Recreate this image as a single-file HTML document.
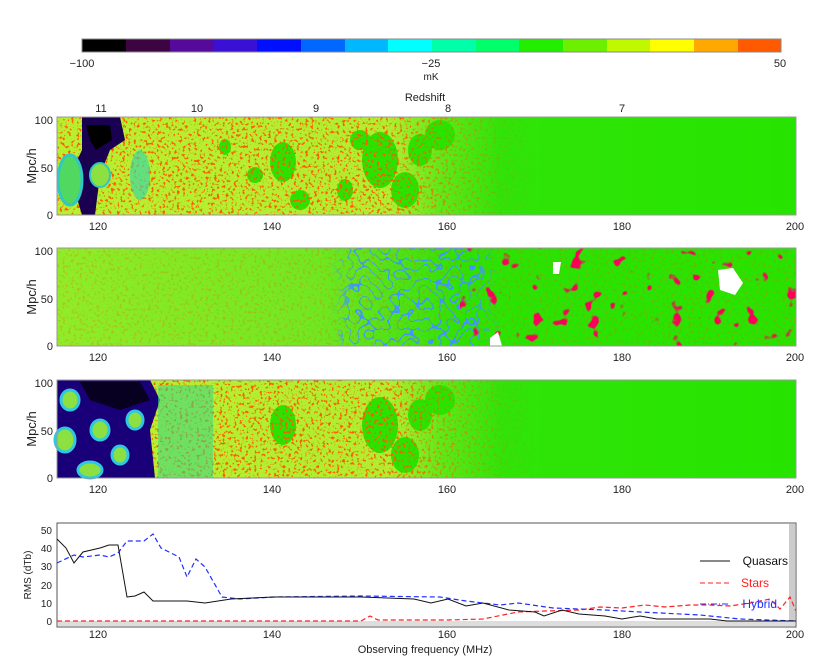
<!DOCTYPE html><html><head><meta charset="utf-8"><style>
html,body{margin:0;padding:0;background:#fff;}
svg{display:block;font-family:"Liberation Sans",sans-serif;}
</style></head><body>
<svg width="822" height="658" viewBox="0 0 822 658" xmlns="http://www.w3.org/2000/svg">
<defs>
<linearGradient id="g1" x1="0" x2="1"><stop offset="0" stop-color="#b8f030"/><stop offset="0.45" stop-color="#b0ee30"/><stop offset="0.52" stop-color="#60e818"/><stop offset="0.6" stop-color="#30e408"/><stop offset="1" stop-color="#26e400"/></linearGradient>
<linearGradient id="g2" x1="0" x2="1"><stop offset="0" stop-color="#90ec28"/><stop offset="0.35" stop-color="#70e820"/><stop offset="0.45" stop-color="#50e418"/><stop offset="0.55" stop-color="#2ae404"/><stop offset="1" stop-color="#26e400"/></linearGradient>
<linearGradient id="mk" x1="0" x2="1"><stop offset="0" stop-color="#fff"/><stop offset="0.45" stop-color="#fff"/><stop offset="0.55" stop-color="#666"/><stop offset="0.65" stop-color="#000"/></linearGradient>
<linearGradient id="mk3" x1="0" x2="1"><stop offset="0" stop-color="#000"/><stop offset="0.15" stop-color="#fff"/><stop offset="0.85" stop-color="#fff"/><stop offset="1" stop-color="#000"/></linearGradient>
<mask id="m1" maskContentUnits="objectBoundingBox"><rect width="1" height="1" fill="url(#mk)"/></mask>
<mask id="m3" maskContentUnits="objectBoundingBox"><rect width="1" height="1" fill="url(#mk3)"/></mask>
<filter id="red" x="0" y="0" width="100%" height="100%"><feTurbulence type="fractalNoise" baseFrequency="0.35" numOctaves="2" seed="3"/><feColorMatrix values="0 0 0 0 1  0 0 0 0 0.1  0 0 0 0 0  7 0 0 0 -3.9"/></filter>
<filter id="red2" x="0" y="0" width="100%" height="100%"><feTurbulence type="fractalNoise" baseFrequency="0.07" numOctaves="2" seed="7"/><feColorMatrix values="0 0 0 0 0.95  0 0 0 0 0  0 0 0 0 0.1  14 0 0 0 -9.2"/></filter>
<filter id="ring" x="0" y="0" width="100%" height="100%"><feTurbulence type="fractalNoise" baseFrequency="0.1" numOctaves="1" seed="5"/><feColorMatrix values="0 0 0 0 0.05  0 0 0 0 0.3  0 0 0 0 1  1 0 0 0 0"/><feComponentTransfer><feFuncA type="discrete" tableValues="0 0 0 0 0 0 0 0 0 1 0 0 0 0 0 0 0 0 0 0"/></feComponentTransfer></filter>
</defs>

<g stroke="none">
<rect x="82" y="39" width="44" height="13" fill="#000"/><rect x="126" y="39" width="44" height="13" fill="#3c0440"/><rect x="170" y="39" width="44" height="13" fill="#560a9c"/><rect x="214" y="39" width="44" height="13" fill="#3a10d4"/><rect x="257" y="39" width="44" height="13" fill="#0010ff"/><rect x="301" y="39" width="44" height="13" fill="#0068ff"/><rect x="345" y="39" width="44" height="13" fill="#00b8ff"/><rect x="388" y="39" width="44" height="13" fill="#00ffff"/><rect x="432" y="39" width="44" height="13" fill="#00ffa8"/><rect x="476" y="39" width="44" height="13" fill="#00ff68"/><rect x="519" y="39" width="44" height="13" fill="#22ee00"/><rect x="563" y="39" width="44" height="13" fill="#6cf000"/><rect x="607" y="39" width="44" height="13" fill="#c0f800"/><rect x="650" y="39" width="44" height="13" fill="#ffff00"/><rect x="694" y="39" width="44" height="13" fill="#ffa800"/><rect x="738" y="39" width="43" height="13" fill="#ff5a00"/>
</g>
<rect x="82" y="39" width="699" height="13" fill="none" stroke="#888" stroke-width="1"/>
<g font-size="11" fill="#222" text-anchor="middle">
<text x="82" y="67">−100</text><text x="431" y="67">−25</text><text x="431" y="80" font-size="10">mK</text><text x="780" y="67">50</text>
<text x="425" y="101">Redshift</text>
<text x="101" y="112">11</text><text x="197" y="112">10</text><text x="316" y="112">9</text><text x="448" y="112">8</text><text x="622" y="112">7</text>
</g>

<g>
<rect x="57" y="117" width="739" height="98" fill="url(#g1)"/>
<g fill="#2ae400"><ellipse cx="283" cy="162" rx="13" ry="20"/><ellipse cx="300" cy="200" rx="10" ry="10"/><ellipse cx="380" cy="160" rx="18" ry="28"/><ellipse cx="405" cy="190" rx="14" ry="18"/><ellipse cx="255" cy="175" rx="8" ry="8"/><ellipse cx="345" cy="190" rx="8" ry="11"/><ellipse cx="225" cy="147" rx="6" ry="8"/><ellipse cx="440" cy="135" rx="15" ry="15"/><ellipse cx="420" cy="150" rx="12" ry="16"/><ellipse cx="360" cy="140" rx="10" ry="10"/></g>
<rect x="57" y="117" width="739" height="98" filter="url(#red)" mask="url(#m1)"/>
<path d="M82 117 L120 117 L125 140 L110 150 L100 175 L95 215 L82 215 L70 175 L82 150 Z" fill="#1a0050"/>
<path d="M86 125 L110 125 L112 140 L96 150 L90 140 Z" fill="#000"/>
<ellipse cx="70" cy="180" rx="12" ry="25" fill="#50d860" stroke="#30c8c0" stroke-width="3"/>
<ellipse cx="140" cy="175" rx="10" ry="25" fill="#40d8a0" opacity="0.7"/>
<ellipse cx="100" cy="175" rx="10" ry="12" fill="#8ce040" stroke="#30c8c0" stroke-width="2"/>
</g>
<rect x="57" y="117" width="739" height="98" fill="none" stroke="#999" stroke-width="1"/>

<g>
<rect x="57" y="248" width="739" height="98" fill="url(#g2)"/>
<rect x="57" y="248" width="739" height="98" filter="url(#red)" opacity="0.25"/>
<rect x="330" y="248" width="170" height="98" filter="url(#ring)" mask="url(#m3)"/>
<rect x="460" y="248" width="336" height="98" filter="url(#red2)"/>
<g fill="#fff"><path d="M718 270 l15 -2 l10 15 l-8 12 l-15 -5z"/><path d="M553 262 l8 0 l-2 12 l-6 0z"/><path d="M490 338 l8 -6 l4 14 l-12 0z"/></g>
</g>
<rect x="57" y="248" width="739" height="98" fill="none" stroke="#999" stroke-width="1"/>

<g>
<rect x="57" y="380" width="739" height="98" fill="url(#g1)"/>
<g fill="#2ae400"><ellipse cx="283" cy="425" rx="13" ry="20"/><ellipse cx="380" cy="425" rx="18" ry="28"/><ellipse cx="405" cy="455" rx="14" ry="18"/><ellipse cx="440" cy="400" rx="15" ry="15"/><ellipse cx="420" cy="415" rx="12" ry="16"/></g>
<rect x="57" y="380" width="739" height="98" filter="url(#red)" mask="url(#m1)"/>
<path d="M57 380 L150 380 L160 400 L150 430 L155 478 L57 478 Z" fill="#1a0078"/>
<path d="M80 382 L140 382 L150 400 L120 410 L90 400 Z" fill="#080020"/>
<g fill="#8ce040" stroke="#30c8e0" stroke-width="3"><ellipse cx="70" cy="400" rx="9" ry="10"/><ellipse cx="65" cy="440" rx="10" ry="12"/><ellipse cx="100" cy="430" rx="9" ry="10"/><ellipse cx="90" cy="470" rx="12" ry="8"/><ellipse cx="120" cy="455" rx="8" ry="9"/><ellipse cx="135" cy="420" rx="8" ry="9"/></g>
<rect x="158" y="385" width="55" height="93" fill="#40d880" opacity="0.6"/>
</g>
<rect x="57" y="380" width="739" height="98" fill="none" stroke="#999" stroke-width="1"/>

<g font-size="11" fill="#222" text-anchor="end">
<text x="53" y="124">100</text><text x="53" y="172">50</text><text x="53" y="219">0</text>
<text x="53" y="255">100</text><text x="53" y="303">50</text><text x="53" y="350">0</text>
<text x="53" y="387">100</text><text x="53" y="435">50</text><text x="53" y="482">0</text>
</g>
<g font-size="13" fill="#222" text-anchor="middle">
<text transform="translate(36 166) rotate(-90)">Mpc/h</text>
<text transform="translate(36 297) rotate(-90)">Mpc/h</text>
<text transform="translate(36 429) rotate(-90)">Mpc/h</text>
</g>
<g font-size="11" fill="#222" text-anchor="middle">
<text x="98" y="230">120</text><text x="272" y="230">140</text><text x="447" y="230">160</text><text x="622" y="230">180</text><text x="795" y="230">200</text>
<text x="98" y="361">120</text><text x="272" y="361">140</text><text x="447" y="361">160</text><text x="622" y="361">180</text><text x="795" y="361">200</text>
<text x="98" y="493">120</text><text x="272" y="493">140</text><text x="447" y="493">160</text><text x="622" y="493">180</text><text x="795" y="493">200</text>
</g>

<rect x="57" y="523" width="739" height="104" fill="none" stroke="#555" stroke-width="1"/>
<rect x="789" y="524" width="6" height="102" fill="#ccc"/>
<rect x="58" y="621" width="737" height="5" fill="#ddd"/>
<g font-size="10" fill="#222" text-anchor="end">
<text x="52" y="534">50</text><text x="52" y="552">40</text><text x="52" y="570">30</text><text x="52" y="589">20</text><text x="52" y="607">10</text><text x="52" y="625">0</text>
</g>
<text transform="translate(31 575) rotate(-90)" font-size="10" fill="#222" text-anchor="middle">RMS (dTb)</text>
<g font-size="11" fill="#222" text-anchor="middle">
<text x="98" y="638">120</text><text x="272" y="638">140</text><text x="447" y="638">160</text><text x="622" y="638">180</text><text x="795" y="638">200</text>
<text x="425" y="653">Observing frequency (MHz)</text>
</g>
<polyline fill="none" stroke="#ff2020" stroke-width="1.2" stroke-dasharray="5,3" points="57,621 361,621 370,616 378,620 448,620 483,619 518,612 545,611 580,610 600,607 622,608 645,605 665,607 690,605 710,605 730,606 750,603 770,599 780,609 790,597 796,611"/>
<polyline fill="none" stroke="#2030ff" stroke-width="1.2" stroke-dasharray="5,3" points="57,563 74,555 83,557 100,555 109,557 118,553 127,541 144,541 153,534 161,548 179,557 187,577 196,559 205,567 222,597 240,599 274,597 361,596 440,597 466,601 500,605 518,603 553,608 605,610 640,612 700,615 740,619 796,621"/>
<polyline fill="none" stroke="#111" stroke-width="1" points="57,539 66,548 74,563 83,552 100,548 109,545 118,545 127,597 135,596 144,592 153,601 187,601 205,603 231,599 274,597 361,597 414,599 431,603 448,599 466,606 483,603 509,610 535,612 544,616 562,610 579,614 605,616 622,619 640,616 657,619 710,619 727,621 796,621"/>
<g font-size="12" text-anchor="end">
<line x1="700" y1="561" x2="730" y2="561" stroke="#111"/><text x="788" y="565" fill="#111">Quasars</text>
<line x1="700" y1="583" x2="730" y2="583" stroke="#ff2020" stroke-dasharray="5,3"/><text x="769" y="587" fill="#ff2020">Stars</text>
<line x1="700" y1="604" x2="730" y2="604" stroke="#2030ff" stroke-dasharray="6,2,1,2"/><text x="777" y="608" fill="#2030ff">Hybrid</text>
</g>
</svg>
</body></html>
